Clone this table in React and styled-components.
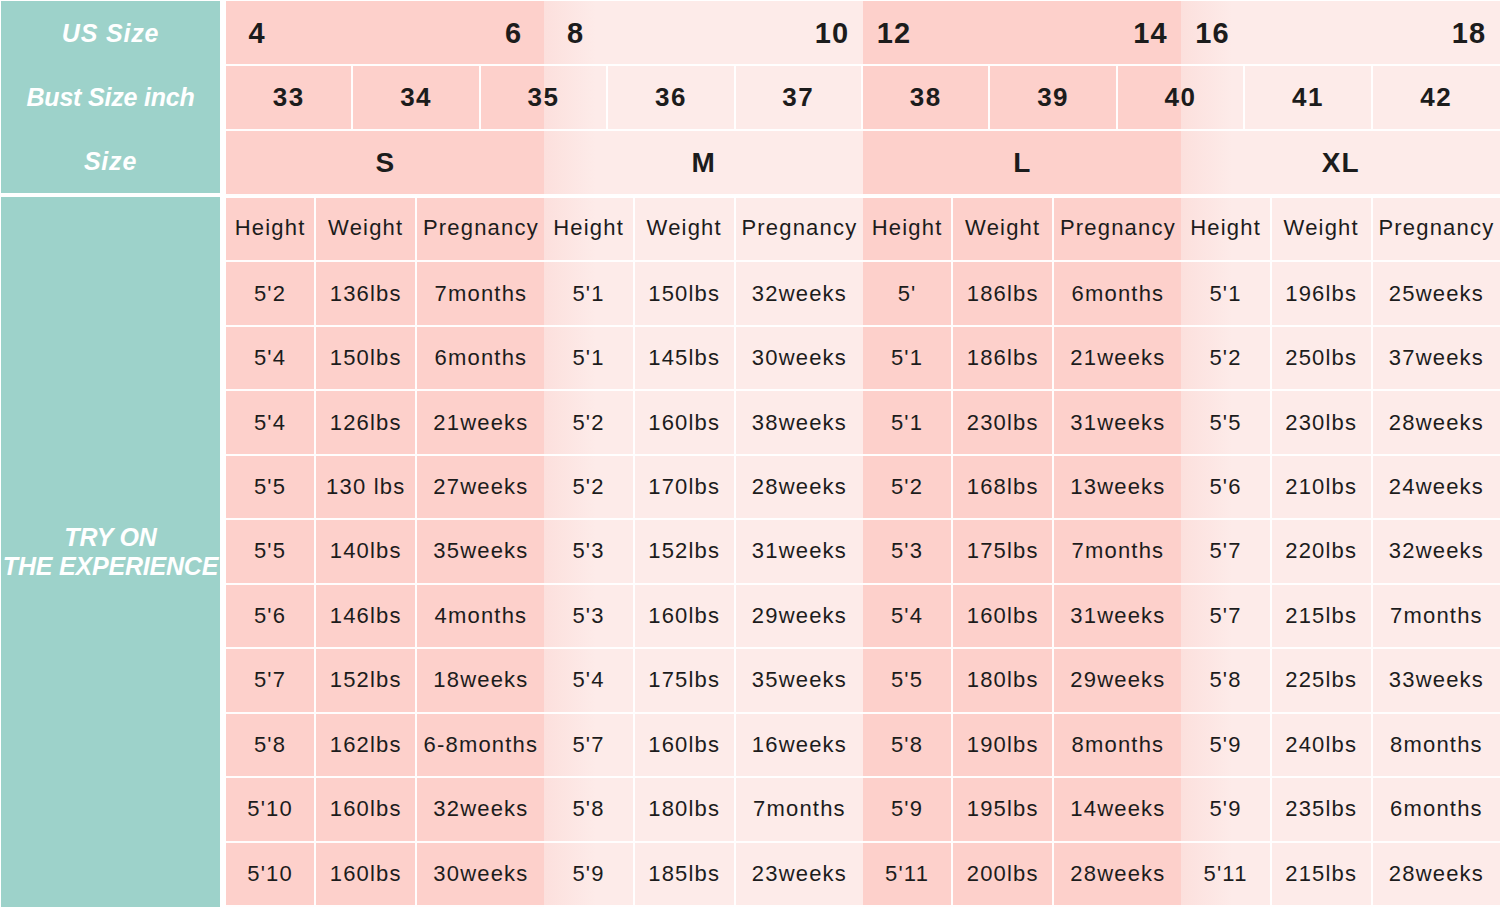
import React from 'react';
import styled, { createGlobalStyle } from 'styled-components';

const GlobalStyle = createGlobalStyle`
    html, body {
        margin: 0;
        padding: 0;
        background: #ffffff;
    }
    body {
        font-family: "Liberation Sans", Arial, sans-serif;
    }
`;

const PINK = '#fdd0cb';
const LIGHT = '#fdebe9';
const LINE = 'rgba(255, 255, 255, 0.95)';

const groups = [
    {
        size: 'S',
        us: ['4', '6'],
        rows: [
            ["5'2", '136lbs', '7months'],
            ["5'4", '150lbs', '6months'],
            ["5'4", '126lbs', '21weeks'],
            ["5'5", '130 lbs', '27weeks'],
            ["5'5", '140lbs', '35weeks'],
            ["5'6", '146lbs', '4months'],
            ["5'7", '152lbs', '18weeks'],
            ["5'8", '162lbs', '6-8months'],
            ["5'10", '160lbs', '32weeks'],
            ["5'10", '160lbs', '30weeks'],
        ],
    },
    {
        size: 'M',
        us: ['8', '10'],
        rows: [
            ["5'1", '150lbs', '32weeks'],
            ["5'1", '145lbs', '30weeks'],
            ["5'2", '160lbs', '38weeks'],
            ["5'2", '170lbs', '28weeks'],
            ["5'3", '152lbs', '31weeks'],
            ["5'3", '160lbs', '29weeks'],
            ["5'4", '175lbs', '35weeks'],
            ["5'7", '160lbs', '16weeks'],
            ["5'8", '180lbs', '7months'],
            ["5'9", '185lbs', '23weeks'],
        ],
    },
    {
        size: 'L',
        us: ['12', '14'],
        rows: [
            ["5'", '186lbs', '6months'],
            ["5'1", '186lbs', '21weeks'],
            ["5'1", '230lbs', '31weeks'],
            ["5'2", '168lbs', '13weeks'],
            ["5'3", '175lbs', '7months'],
            ["5'4", '160lbs', '31weeks'],
            ["5'5", '180lbs', '29weeks'],
            ["5'8", '190lbs', '8months'],
            ["5'9", '195lbs', '14weeks'],
            ["5'11", '200lbs', '28weeks'],
        ],
    },
    {
        size: 'XL',
        us: ['16', '18'],
        rows: [
            ["5'1", '196lbs', '25weeks'],
            ["5'2", '250lbs', '37weeks'],
            ["5'5", '230lbs', '28weeks'],
            ["5'6", '210lbs', '24weeks'],
            ["5'7", '220lbs', '32weeks'],
            ["5'7", '215lbs', '7months'],
            ["5'8", '225lbs', '33weeks'],
            ["5'9", '240lbs', '8months'],
            ["5'9", '235lbs', '6months'],
            ["5'11", '215lbs', '28weeks'],
        ],
    },
];

const bust = ['33', '34', '35', '36', '37', '38', '39', '40', '41', '42'];
const columns = ['Height', 'Weight', 'Pregnancy'];

const Page = styled.div`
    display: flex;
    gap: 6px;
    width: 1500px;
    height: 907px;
    padding: 1px 0 0 1px;
    box-sizing: border-box;
    background: #ffffff;
    overflow: hidden;
`;

const Side = styled.aside`
    width: 219px;
    display: flex;
    flex-direction: column;
    gap: 4px;
`;

const SideTop = styled.div`
    height: 192px;
    display: grid;
    grid-template-rows: repeat(3, 1fr);
    background: #9dd2ca;
`;

const SideBottom = styled.div`
    flex: 1;
    display: flex;
    align-items: center;
    justify-content: center;
    background: #9dd2ca;
`;

const SideLabel = styled.div`
    display: flex;
    align-items: center;
    justify-content: center;
    text-align: center;
    color: #ffffff;
    font-size: 25px;
    font-weight: 700;
    font-style: italic;
    letter-spacing: ${(p) => (p.$tight ? '-0.2px' : '0.8px')};
    line-height: 29px;
    white-space: nowrap;
`;

const Chart = styled.section`
    flex: 1;
    display: flex;
    flex-direction: column;
    background: linear-gradient(
        to right,
        ${PINK} 0 25%,
        #fce0dd 25%,
        ${LIGHT} 29%,
        ${LIGHT} 50%,
        ${PINK} 50% 75%,
        #fce0dd 75%,
        ${LIGHT} 79%,
        ${LIGHT} 100%
    );
    color: #1c1c1c;
`;

const BandRow = styled.div`
    height: ${(p) => p.$h}px;
    display: grid;
    grid-template-columns: repeat(${(p) => p.$cols}, 1fr);
    border-bottom: ${(p) => p.$line}px solid ${LINE};
`;

const UsCell = styled.div`
    display: flex;
    align-items: center;
    justify-content: space-between;
    padding-top: 1px;

    & > span {
        width: 62px;
        text-align: center;
        font-size: 29px;
        font-weight: 700;
        letter-spacing: 1px;
    }
`;

const BustCell = styled.div`
    display: flex;
    align-items: center;
    justify-content: center;
    font-size: 26px;
    font-weight: 700;
    letter-spacing: 1.5px;

    &:not(:last-child) {
        border-right: 2px solid ${LINE};
    }
`;

const SizeCell = styled.div`
    display: flex;
    align-items: center;
    justify-content: center;
    font-size: 28px;
    font-weight: 700;
    letter-spacing: 1px;
`;

const Body = styled.div`
    flex: 1;
    display: grid;
    grid-template-columns: repeat(4, 90fr 101fr 127fr);
    grid-template-rows: repeat(11, 1fr);
    border-top: 2px solid #ffffff;
`;

const Cell = styled.div`
    display: flex;
    align-items: center;
    justify-content: center;
    padding-bottom: ${(p) => (p.$head ? '3px' : '0')};
    font-size: 22px;
    letter-spacing: 1.2px;
    white-space: nowrap;
    border-bottom: 2px solid ${LINE};
    border-right: ${(p) => (p.$edge ? 'none' : `2px solid ${LINE}`)};
`;

export default function App() {
    return (
        <>
            <GlobalStyle />
            <Page>
                <Side>
                    <SideTop>
                        <SideLabel>US Size</SideLabel>
                        <SideLabel $tight>Bust Size inch</SideLabel>
                        <SideLabel>Size</SideLabel>
                    </SideTop>
                    <SideBottom>
                        <SideLabel $tight>
                            TRY ON
                            <br />
                            THE EXPERIENCE
                        </SideLabel>
                    </SideBottom>
                </Side>
                <Chart>
                    <BandRow $h={63} $cols={4} $line={2}>
                        {groups.map((g) => (
                            <UsCell key={g.size}>
                                <span>{g.us[0]}</span>
                                <span>{g.us[1]}</span>
                            </UsCell>
                        ))}
                    </BandRow>
                    <BandRow $h={63} $cols={10} $line={2}>
                        {bust.map((b) => (
                            <BustCell key={b}>{b}</BustCell>
                        ))}
                    </BandRow>
                    <BandRow $h={63} $cols={4} $line={2}>
                        {groups.map((g) => (
                            <SizeCell key={g.size}>{g.size}</SizeCell>
                        ))}
                    </BandRow>
                    <Body>
                        {groups.map((g) =>
                            columns.map((c, i) => (
                                <Cell key={g.size + c} style={{ gridRow: 1 }} $edge={i === 2} $head>
                                    {c}
                                </Cell>
                            )),
                        )}
                        {groups[0].rows.map((_, r) =>
                            groups.map((g, gi) =>
                                g.rows[r].map((v, i) => (
                                    <Cell
                                        key={`${r}-${gi}-${i}`}
                                        style={{ gridRow: r + 2, gridColumn: gi * 3 + i + 1 }}
                                        $edge={i === 2}
                                    >
                                        {v}
                                    </Cell>
                                )),
                            ),
                        )}
                    </Body>
                </Chart>
            </Page>
        </>
    );
}
